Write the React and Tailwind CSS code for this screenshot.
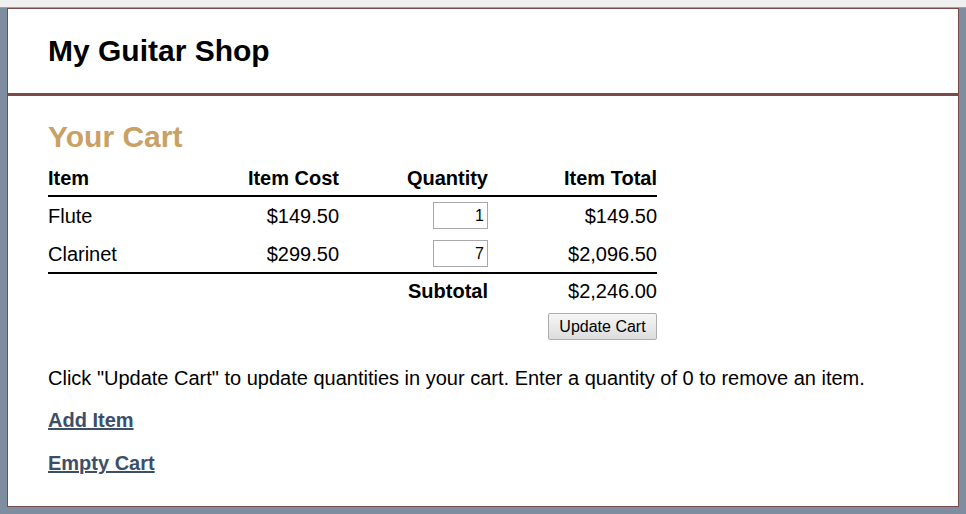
export default function App() {
  const items = [
    { name: 'Flute', cost: '$149.50', qty: 1, total: '$149.50' },
    { name: 'Clarinet', cost: '$299.50', qty: 7, total: '$2,096.50' },
  ];

  return (
    <div className="w-[966px] h-[514px] flex flex-col bg-[#7f8da0] font-['Liberation_Sans',Arial,sans-serif] text-black overflow-hidden">
      {/* browser strip */}
      <div className="h-[7px] bg-[#f0f0f0] shrink-0" />
      <div className="h-px bg-[#a0a0a0] shrink-0" />

      <div className="flex-1 px-[7px] pb-[7px] flex">
        <div className="flex-1 bg-white border border-[#7b4b4b] flex flex-col">
          <header className="h-[87px] shrink-0 border-b-[3px] border-[#7b4b4b] flex items-center px-10">
            <h1 className="text-[30px] font-bold leading-9 -mt-[1px]">My Guitar Shop</h1>
          </header>

          <main className="px-10 pt-[23px]">
            <h2 className="text-[30px] font-bold leading-9 text-[#c9a165]">Your Cart</h2>

            <div className="w-[609px] mt-[11px]">
              <div className="grid grid-cols-[150px_141px_149px_169px] text-[20px] font-bold leading-6 pb-[5px] border-b-2 border-black">
                <div>Item</div>
                <div className="text-right">Item Cost</div>
                <div className="text-right">Quantity</div>
                <div className="text-right">Item Total</div>
              </div>

              {items.map((item, idx) => (
                <div
                  key={item.name}
                  className={
                    idx === 0
                      ? 'grid grid-cols-[150px_141px_149px_169px] items-center text-[20px] leading-6 pt-[5px] pb-[7px]'
                      : 'grid grid-cols-[150px_141px_149px_169px] items-center text-[20px] leading-6 pt-[4px] pb-[5px] border-b-2 border-black'
                  }
                >
                  <div>{item.name}</div>
                  <div className="text-right">{item.cost}</div>
                  <div className="flex justify-end">
                    <input
                      defaultValue={item.qty}
                      className="w-[55px] h-[27px] border border-[#a9a9a9] text-right text-[16px] pr-[3px] outline-none"
                    />
                  </div>
                  <div className="text-right">{item.total}</div>
                </div>
              ))}

              <div className="grid grid-cols-[150px_141px_149px_169px] text-[20px] leading-6 pt-[5px] pb-[5px]">
                <div />
                <div />
                <div className="text-right font-bold">Subtotal</div>
                <div className="text-right">$2,246.00</div>
              </div>

              <div className="flex justify-end mt-[5px]">
                <button className="w-[109px] h-[27px] text-[16px] border border-[#adadad] rounded-[2px] bg-gradient-to-b from-[#f6f6f6] to-[#dddddd] leading-none">
                  Update Cart
                </button>
              </div>
            </div>

            <p className="text-[20px] leading-6 mt-[26px]">
              Click "Update Cart" to update quantities in your cart. Enter a quantity of 0 to remove an item.
            </p>
            <p className="mt-[18px] text-[20px] leading-6">
              <a href="#" className="font-bold underline text-[#3b4f68]">Add Item</a>
            </p>
            <p className="mt-[19px] text-[20px] leading-6">
              <a href="#" className="font-bold underline text-[#3b4f68]">Empty Cart</a>
            </p>
          </main>
        </div>
      </div>
    </div>
  );
}
